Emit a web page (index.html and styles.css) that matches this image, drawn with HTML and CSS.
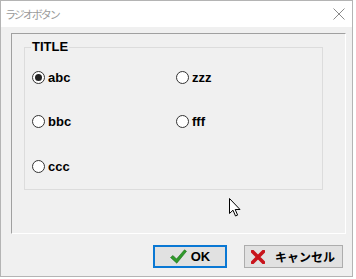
FILE: index.html
```html
<!DOCTYPE html>
<html lang="ja">
<head>
<meta charset="utf-8">
<title>ラジオボタン</title>
<link rel="stylesheet" href="styles.css">
</head>
<body>
<div class="window">
  <div class="titlebar">
    <span class="title">ラジオボタン</span>
    <svg class="close" width="12" height="12" viewBox="0 0 12 12"><path d="M0.5 0.5 L11.5 11.5 M11.5 0.5 L0.5 11.5" stroke="#8a8a8a" stroke-width="1" fill="none"/></svg>
  </div>
  <div class="body">
    <div class="panel">
      <fieldset class="group">
        <legend class="group-title">TITLE</legend>
        <div class="radios">
          <label class="radio"><span class="mark checked"></span>abc</label>
          <label class="radio"><span class="mark"></span>zzz</label>
          <label class="radio"><span class="mark"></span>bbc</label>
          <label class="radio"><span class="mark"></span>fff</label>
          <label class="radio"><span class="mark"></span>ccc</label>
        </div>
      </fieldset>
    </div>
    <div class="buttons">
      <button class="btn btn-default">
        <svg class="icon" width="17" height="15" viewBox="0 0 17 15"><path d="M0.5 8.5 L3 6.5 L6.5 10 L14.5 0.8 L16.5 2.3 L6.8 14.2 Z" fill="#2f9a2a" stroke="#1f6f1c" stroke-width="0.6"/></svg>
        <span>OK</span>
      </button>
      <button class="btn btn-cancel">
        <svg class="icon" width="14" height="14" viewBox="0 0 14 14"><path d="M1.5 1.5 L12.5 12.5 M12.5 1.5 L1.5 12.5" stroke="#c8141c" stroke-width="3.6" stroke-linecap="square" fill="none"/></svg>
        <span class="jp">キャンセル</span>
      </button>
    </div>
  </div>
  <svg class="cursor" width="13" height="19" viewBox="0 0 13 19"><path d="M0.5 0.5 L0.5 15.5 L4 12.2 L6.5 18 L8.6 17.1 L6.2 11.5 L11 11.5 Z" fill="#fff" stroke="#000" stroke-width="1" stroke-linejoin="miter"/></svg>
</div>
</body>
</html>
```

FILE: styles.css
```css
html, body {
  margin: 0;
  padding: 0;
  background: #ffffff;
}

.window {
  position: relative;
  box-sizing: border-box;
  width: 353px;
  height: 277px;
  border: 1px solid #b4b4b4;
  background: #f0f0f0;
  display: flex;
  flex-direction: column;
  font-family: "Liberation Sans", Arial, "Noto Sans CJK JP", sans-serif;
}

.titlebar {
  height: 26px;
  background: #ffffff;
  display: flex;
  align-items: center;
  justify-content: space-between;
  padding: 0 7px 0 4px;
}

.title {
  font-family: "Noto Sans CJK JP", sans-serif;
  font-size: 11px;
  letter-spacing: -2px;
  color: #9a9a9a;
}

.close {
  display: block;
}

.body {
  flex: 1;
  display: flex;
  flex-direction: column;
  padding: 6px 6px 8px 10px;
}

.panel {
  height: 201px;
  box-sizing: border-box;
  border-top: 1px solid #a0a0a0;
  border-left: 1px solid #a0a0a0;
  border-right: 1px solid #ffffff;
  border-bottom: 1px solid #ffffff;
  padding: 6px 0 0 12px;
}

.group {
  box-sizing: border-box;
  width: 299px;
  height: 150px;
  margin: 0;
  padding: 0 0 0 7px;
  border: 1px solid #dcdcdc;
}

.group-title {
  margin-left: -1px;
  padding: 0 1px;
  font-size: 13px;
  font-weight: bold;
  line-height: 14px;
  color: #000;
}

.radios {
  display: grid;
  grid-template-columns: 144px 1fr;
  grid-auto-rows: 20px;
  row-gap: 24.5px;
  padding-top: 13px;
}

.radio {
  display: flex;
  align-items: center;
  gap: 3px;
  font-size: 13px;
  font-weight: bold;
  color: #000;
}

.mark {
  box-sizing: border-box;
  width: 13px;
  height: 13px;
  border: 1px solid #333;
  border-radius: 50%;
  background: #ffffff;
  display: flex;
  align-items: center;
  justify-content: center;
}

.mark.checked::after {
  content: "";
  width: 7px;
  height: 7px;
  border-radius: 50%;
  background: #222;
}

.buttons {
  display: flex;
  justify-content: flex-end;
  gap: 17px;
  margin-top: 11px;
  padding-right: 3px;
}

.btn {
  box-sizing: border-box;
  height: 23px;
  width: 99px;
  margin: 0;
  padding: 0;
  border: 1px solid #adadad;
  background: #e1e1e1;
  display: flex;
  align-items: center;
  justify-content: center;
  gap: 9px;
  font-family: "Liberation Sans", Arial, sans-serif;
  font-size: 13px;
  font-weight: bold;
  color: #000;
}

.btn-cancel {
  justify-content: flex-start;
  padding-left: 6px;
  gap: 10px;
}

.btn-default {
  width: 74px;
  border: 2px solid #0a78d4;
  gap: 4px;
}

.icon {
  display: block;
}

.jp {
  font-family: "Noto Sans CJK JP", sans-serif;
  font-size: 12px;
}

.cursor {
  position: absolute;
  left: 228px;
  top: 197px;
}
```
